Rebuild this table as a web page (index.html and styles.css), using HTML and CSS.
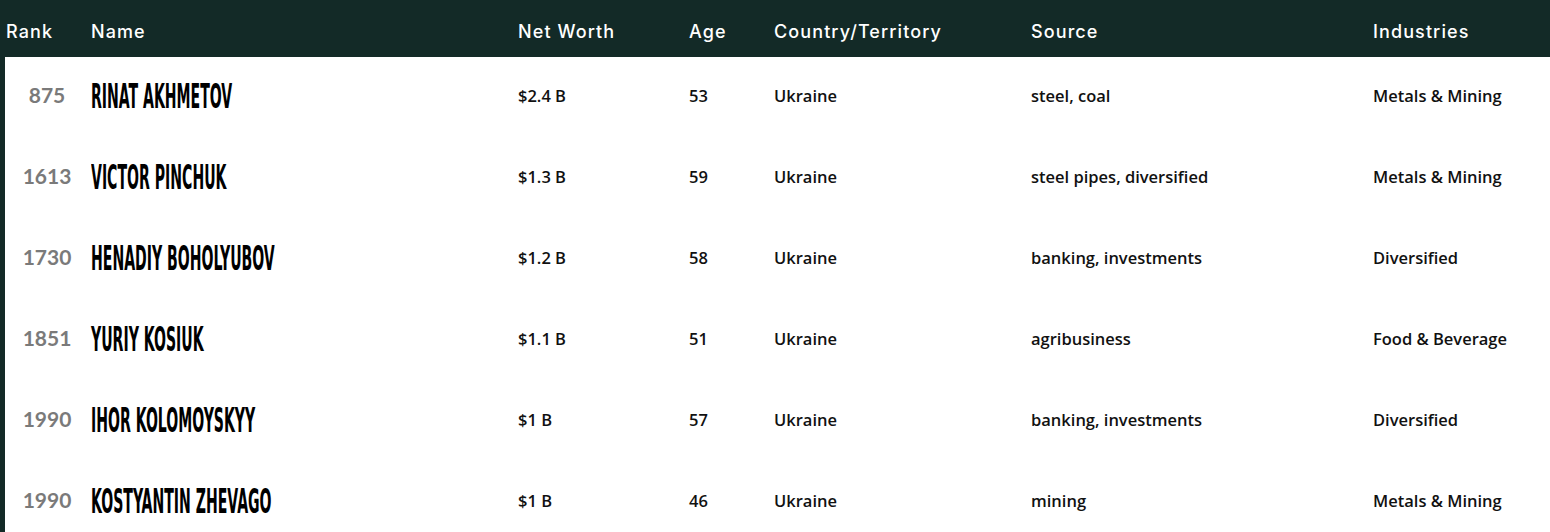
FILE: index.html
```html
<!DOCTYPE html>
<html>
<head>
<meta charset="utf-8">
<link rel="stylesheet" href="styles.css">
</head>
<body>
<div class="table">
  <div class="row head">
    <div class="c rank-h">Rank</div>
    <div class="c">Name</div>
    <div class="c">Net Worth</div>
    <div class="c">Age</div>
    <div class="c">Country/Territory</div>
    <div class="c">Source</div>
    <div class="c">Industries</div>
  </div>
  <div class="row">
    <div class="c rank">875</div>
    <div class="c name"><span>RINAT AKHMETOV</span></div>
    <div class="c">$2.4 B</div>
    <div class="c">53</div>
    <div class="c">Ukraine</div>
    <div class="c">steel, coal</div>
    <div class="c">Metals &amp; Mining</div>
  </div>
  <div class="row">
    <div class="c rank">1613</div>
    <div class="c name"><span>VICTOR PINCHUK</span></div>
    <div class="c">$1.3 B</div>
    <div class="c">59</div>
    <div class="c">Ukraine</div>
    <div class="c">steel pipes, diversified</div>
    <div class="c">Metals &amp; Mining</div>
  </div>
  <div class="row">
    <div class="c rank">1730</div>
    <div class="c name"><span>HENADIY BOHOLYUBOV</span></div>
    <div class="c">$1.2 B</div>
    <div class="c">58</div>
    <div class="c">Ukraine</div>
    <div class="c">banking, investments</div>
    <div class="c">Diversified</div>
  </div>
  <div class="row">
    <div class="c rank">1851</div>
    <div class="c name"><span>YURIY KOSIUK</span></div>
    <div class="c">$1.1 B</div>
    <div class="c">51</div>
    <div class="c">Ukraine</div>
    <div class="c">agribusiness</div>
    <div class="c">Food &amp; Beverage</div>
  </div>
  <div class="row">
    <div class="c rank">1990</div>
    <div class="c name"><span>IHOR KOLOMOYSKYY</span></div>
    <div class="c">$1 B</div>
    <div class="c">57</div>
    <div class="c">Ukraine</div>
    <div class="c">banking, investments</div>
    <div class="c">Diversified</div>
  </div>
  <div class="row">
    <div class="c rank">1990</div>
    <div class="c name"><span>KOSTYANTIN ZHEVAGO</span></div>
    <div class="c">$1 B</div>
    <div class="c">46</div>
    <div class="c">Ukraine</div>
    <div class="c">mining</div>
    <div class="c">Metals &amp; Mining</div>
  </div>
</div>
</body>
</html>
```
FILE: styles.css
```css
html, body {
  margin: 0;
  padding: 0;
  background: #ffffff;
  overflow: hidden;
}
.table {
  width: 1550px;
  height: 532px;
  border-left: 5px solid #132a27;
  box-sizing: border-box;
  font-family: "Open Sans", "Liberation Sans", sans-serif;
  color: #111;
}
.row {
  display: grid;
  grid-template-columns: 86px 427px 171px 85px 257px 342px 1fr;
  height: 81px;
  align-items: center;
  font-size: 16.5px;
  font-weight: 600;
}
.row .c { margin-top: -4px; }
.head {
  height: 57px;
  background: #132a27;
  color: #ffffff;
  font-family: "Inter", "Open Sans", sans-serif;
  font-size: 18px;
  font-weight: 500;
  margin-left: -5px;
  padding-left: 5px;
  padding-top: 9px;
  box-sizing: border-box;
}
.head .c { letter-spacing: 1.1px; }
.rank-h { margin-left: 1px; }
.rank {
  text-align: center;
  padding-right: 2px;
  color: #7a7a7a;
  font-family: "Lato", "Open Sans", sans-serif;
  font-size: 21px;
  font-weight: 700;
}
.row .rank { margin-top: -6px; }
.name span {
  display: inline-block;
  font-family: "DejaVu Sans", "Liberation Sans", sans-serif;
  font-stretch: condensed;
  font-weight: 700;
  font-size: 34px;
  color: #000;
  transform: scaleX(0.46);
  transform-origin: left center;
  white-space: nowrap;
}
```
